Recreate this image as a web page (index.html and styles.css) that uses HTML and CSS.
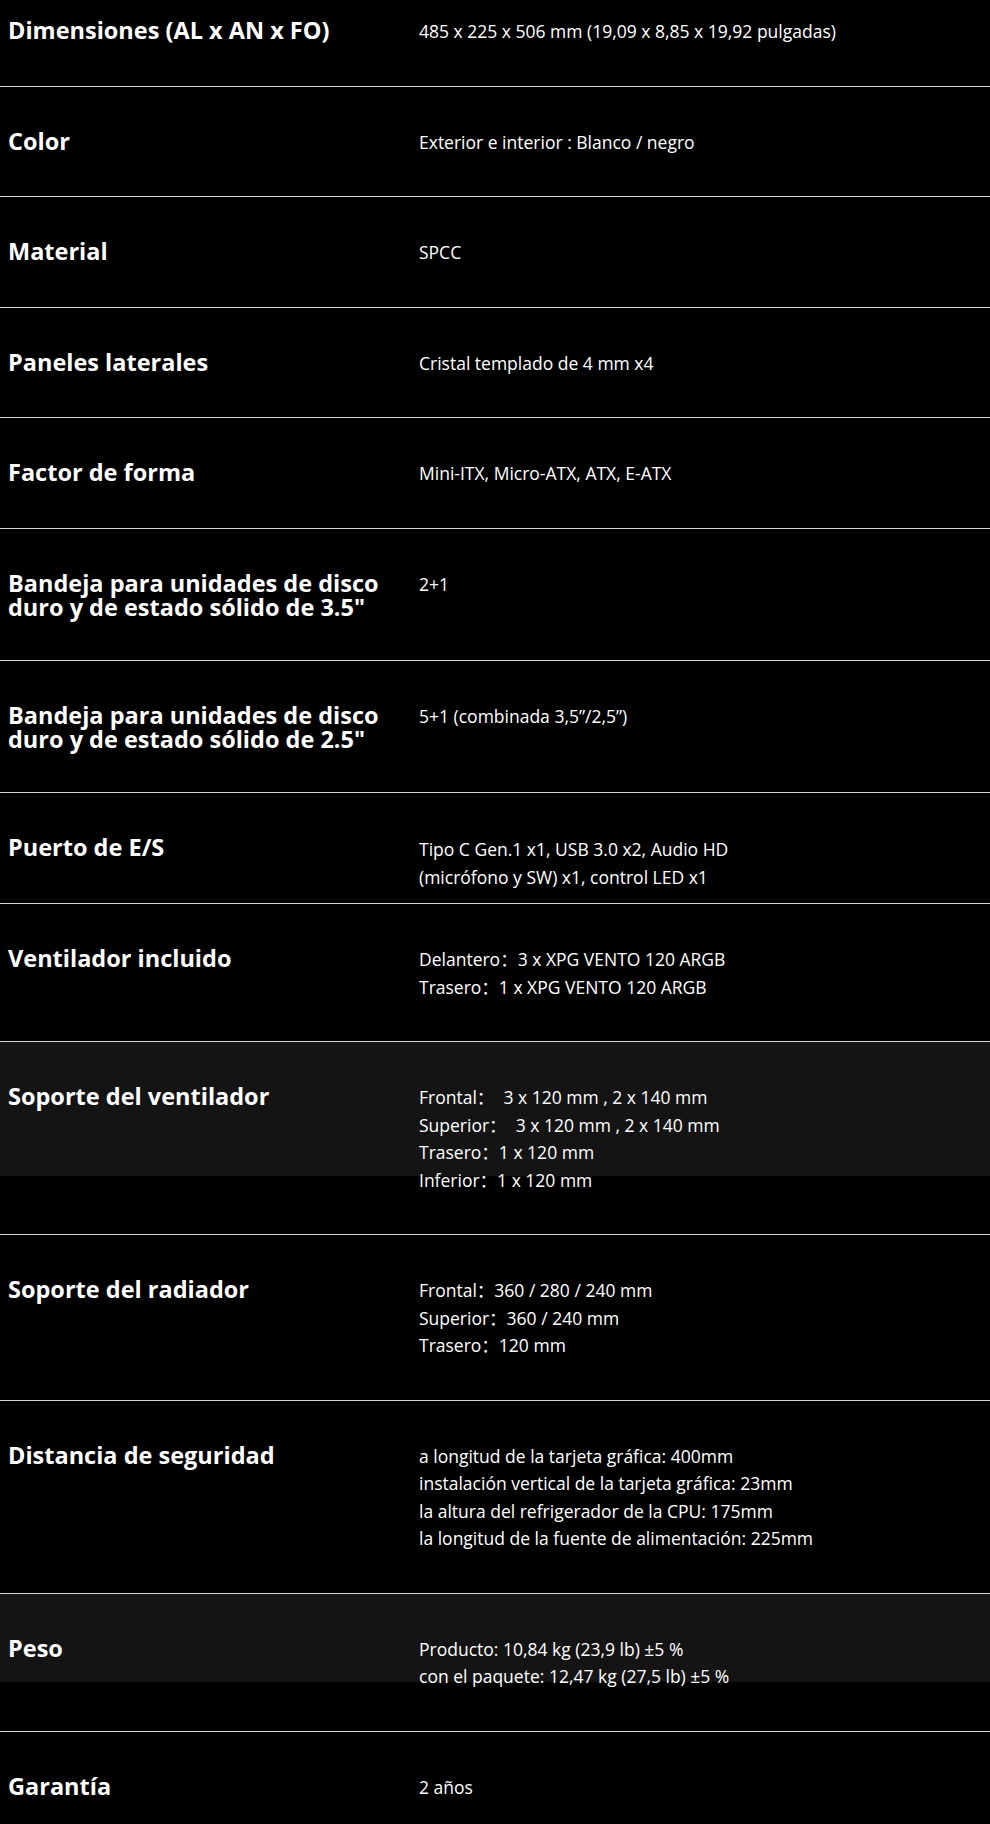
FILE: index.html
```html
<!DOCTYPE html>
<html lang="es">
<head>
    <meta charset="UTF-8">
    <meta name="viewport" content="width=device-width, initial-scale=1.0">
    <title>Especificaciones</title>
    <link rel="stylesheet" href="styles.css">
</head>
<body>

<div class="specs">
    <div class="spec-row">
        <h3 class="spec-label">Dimensiones (AL x AN x FO)</h3>
        <div class="spec-value">
            <p>485 x 225 x 506 mm (19,09 x 8,85 x 19,92 pulgadas)</p>
        </div>
    </div>

    <div class="spec-row">
        <h3 class="spec-label">Color</h3>
        <div class="spec-value">
            <p>Exterior e interior : Blanco / negro</p>
        </div>
    </div>

    <div class="spec-row">
        <h3 class="spec-label">Material</h3>
        <div class="spec-value">
            <p>SPCC</p>
        </div>
    </div>

    <div class="spec-row">
        <h3 class="spec-label">Paneles laterales</h3>
        <div class="spec-value">
            <p>Cristal templado de 4 mm x4</p>
        </div>
    </div>

    <div class="spec-row">
        <h3 class="spec-label">Factor de forma</h3>
        <div class="spec-value">
            <p>Mini-ITX, Micro-ATX, ATX, E-ATX</p>
        </div>
    </div>

    <div class="spec-row">
        <h3 class="spec-label">Bandeja para unidades de disco duro y de estado sólido de 3.5"</h3>
        <div class="spec-value">
            <p>2+1</p>
        </div>
    </div>

    <div class="spec-row">
        <h3 class="spec-label">Bandeja para unidades de disco duro y de estado sólido de 2.5"</h3>
        <div class="spec-value">
            <p>5+1 (combinada 3,5”/2,5”)</p>
        </div>
    </div>

    <div class="spec-row">
        <h3 class="spec-label">Puerto de E/S</h3>
        <div class="spec-value single">
            <p class="wrapped">Tipo C Gen.1 x1, USB 3.0 x2, Audio HD<br>(micrófono y SW) x1, control LED x1</p>
        </div>
    </div>

    <div class="spec-row">
        <h3 class="spec-label">Ventilador incluido</h3>
        <div class="spec-value">
            <p>Delantero：3 x XPG VENTO 120 ARGB</p>
            <p>Trasero：1 x XPG VENTO 120 ARGB</p>
        </div>
    </div>

    <div class="spec-row shaded shaded-tall">
        <h3 class="spec-label">Soporte del ventilador</h3>
        <div class="spec-value">
            <p>Frontal：&nbsp; 3 x 120 mm , 2 x 140 mm</p>
            <p>Superior：&nbsp; 3 x 120 mm , 2 x 140 mm</p>
            <p>Trasero：1 x 120 mm</p>
            <p>Inferior：1 x 120 mm</p>
        </div>
    </div>

    <div class="spec-row">
        <h3 class="spec-label">Soporte del radiador</h3>
        <div class="spec-value">
            <p>Frontal：360 / 280 / 240 mm</p>
            <p>Superior：360 / 240 mm</p>
            <p>Trasero：120 mm</p>
        </div>
    </div>

    <div class="spec-row">
        <h3 class="spec-label">Distancia de seguridad</h3>
        <div class="spec-value">
            <p>a longitud de la tarjeta gráfica: 400mm</p>
            <p>instalación vertical de la tarjeta gráfica: 23mm</p>
            <p>la altura del refrigerador de la CPU: 175mm</p>
            <p>la longitud de la fuente de alimentación: 225mm</p>
        </div>
    </div>

    <div class="spec-row shaded shaded-short">
        <h3 class="spec-label">Peso</h3>
        <div class="spec-value">
            <p>Producto: 10,84 kg (23,9 lb) ±5 %</p>
            <p>con el paquete: 12,47 kg (27,5 lb) ±5 %</p>
        </div>
    </div>

    <div class="spec-row">
        <h3 class="spec-label">Garantía</h3>
        <div class="spec-value">
            <p>2 años</p>
        </div>
    </div>
</div>

</body>
</html>
```

FILE: styles.css
```css
* {
    margin: 0;
    padding: 0;
    box-sizing: border-box;
}

body {
    background-color: #000;
    color: #fff;
    font-family: 'Open Sans', 'Noto Sans CJK SC', sans-serif;
}

/* the page is cut off mid-scroll, first row starts above the window */
.specs {
    margin-top: -24px;
}

.spec-row {
    display: flex;
    align-items: flex-start;
    padding: 42px 8px 40px;
    border-bottom: 1px solid #d4d4d4;
}

.spec-row.shaded {
    background: linear-gradient(#141414, #141414) top left / 100% 134px no-repeat;
}

.spec-row.shaded-short {
    background-size: 100% 88px;
}

.spec-label {
    flex: 0 0 411px;
    padding-right: 16px;
    font-size: 23.5px;
    line-height: 24px;
    font-weight: 700;
    margin-bottom: 1px;
}

.spec-value {
    font-size: 17.5px;
    line-height: 27.5px;
}

/* this one wraps inside a fixed box, its second line hangs over the row padding */
.spec-value.single {
    height: 28.5px;
}

.spec-value .wrapped {
    line-height: 28.3px;
}
```
